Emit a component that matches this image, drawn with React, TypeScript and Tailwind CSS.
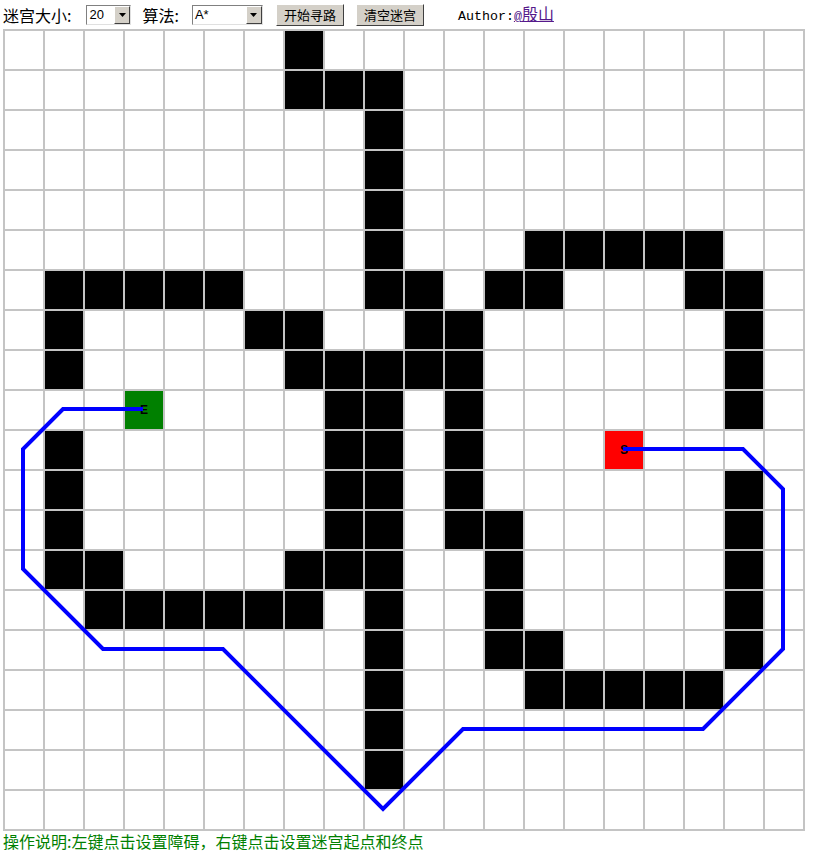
import React from "react";

const BLACK: Record<number, number[]> = {
  0: [7],
  1: [7, 8, 9],
  2: [9],
  3: [9],
  4: [9],
  5: [9, 13, 14, 15, 16, 17],
  6: [1, 2, 3, 4, 5, 9, 10, 12, 13, 17, 18],
  7: [1, 6, 7, 10, 11, 18],
  8: [1, 7, 8, 9, 10, 11, 18],
  9: [8, 9, 11, 18],
  10: [1, 8, 9, 11],
  11: [1, 8, 9, 11, 18],
  12: [1, 8, 9, 11, 12, 18],
  13: [1, 2, 7, 8, 9, 12, 18],
  14: [2, 3, 4, 5, 6, 7, 9, 12, 18],
  15: [9, 12, 13, 18],
  16: [9, 13, 14, 15, 16, 17],
  17: [9],
  18: [9],
  19: [],
};

const CJK = { fontFamily: '"Noto Sans CJK SC", "Noto Sans", sans-serif' };

function FakeSelect({ value, width }: { value: string; width: string }) {
  return (
    <div
      className={`${width} h-[20px] flex items-stretch bg-white border border-t-[#808080] border-l-[#808080] border-b-[#e0e0e0] border-r-[#e0e0e0]`}
    >
      <div
        className="flex-1 flex items-center pl-[2px] text-[13px] text-black leading-none"
        style={{ fontFamily: '"Liberation Sans", Arial, sans-serif' }}
      >
        {value}
      </div>
      <div className="w-[16px] bg-[#d4d0c8] border border-t-white border-l-white border-b-[#404040] border-r-[#404040] flex items-center justify-center">
        <svg width="7" height="4" viewBox="0 0 7 4">
          <polygon points="0,0 7,0 3.5,4" fill="#000" />
        </svg>
      </div>
    </div>
  );
}

function Btn({ label }: { label: string }) {
  return (
    <div
      className="h-[22px] w-[68px] bg-[#d4d0c8] border border-t-white border-l-white border-b-[#404040] border-r-[#404040] flex items-center justify-center text-[13px] text-black leading-none"
      style={CJK}
    >
      {label}
    </div>
  );
}

export default function App() {
  const rows = Array.from({ length: 20 }, (_, r) => r);
  const cols = Array.from({ length: 20 }, (_, c) => c);
  return (
    <div className="w-[821px] h-[855px] bg-white overflow-hidden">
      <div className="h-[29px] flex items-center pl-[3px] text-[16px] text-black">
        <span className="leading-none" style={CJK}>
          迷宫大小:
        </span>
        <div className="ml-[15px]">
          <FakeSelect value="20" width="w-[45px]" />
        </div>
        <span className="ml-[11px] leading-none" style={CJK}>
          算法:
        </span>
        <div className="ml-[13px]">
          <FakeSelect value="A*" width="w-[71px]" />
        </div>
        <div className="ml-[13px]">
          <Btn label="开始寻路" />
        </div>
        <div className="ml-[12px]">
          <Btn label="清空迷宫" />
        </div>
        <span
          className="ml-[34px] text-[13.33px] leading-none"
          style={{ fontFamily: '"Liberation Mono", "Courier New", monospace' }}
        >
          Author:
          <a href="#" className="text-[#551a8b] underline">
            @<span className="text-[16px]" style={CJK}>殷山</span>
          </a>
        </span>
      </div>
      <div className="ml-[3px] relative w-[802px] border-r-2 border-b-2 border-[#c4c4c4]">
        <div className="grid grid-cols-[repeat(20,40px)]">
          {rows.map((r) =>
            cols.map((c) => {
              const isBlack = BLACK[r].includes(c);
              const isS = r === 10 && c === 15;
              const isE = r === 9 && c === 3;
              let bg = "bg-white";
              if (isBlack) bg = "bg-black";
              if (isS) bg = "bg-[#ff0000]";
              if (isE) bg = "bg-[#008000]";
              return (
                <div
                  key={`${r}-${c}`}
                  className={`h-[40px] border-l-2 border-t-2 border-[#c4c4c4] flex items-center justify-center ${bg}`}
                >
                  {isS && (
                    <span
                      className="text-[12px] font-bold text-black leading-none"
                      style={{ fontFamily: '"Liberation Sans", Arial, sans-serif' }}
                    >
                      S
                    </span>
                  )}
                  {isE && (
                    <span
                      className="text-[12px] font-bold text-black leading-none"
                      style={{ fontFamily: '"Liberation Sans", Arial, sans-serif' }}
                    >
                      E
                    </span>
                  )}
                </div>
              );
            })
          )}
        </div>
        <svg
          className="absolute left-0 top-0 pointer-events-none"
          width="802"
          height="802"
          viewBox="0 0 802 802"
        >
          <polyline
            points="620,420 740,420 780,460 780,620 700,700 460,700 380,780 220,620 100,620 20,540 20,420 60,380 140,380"
            fill="none"
            stroke="#0000ff"
            strokeWidth="4"
          />
        </svg>
      </div>
      <div className="pl-[3px] text-[16px] leading-[20px] text-[#008000]" style={CJK}>
        操作说明:左键点击设置障碍，右键点击设置迷宫起点和终点
      </div>
    </div>
  );
}
